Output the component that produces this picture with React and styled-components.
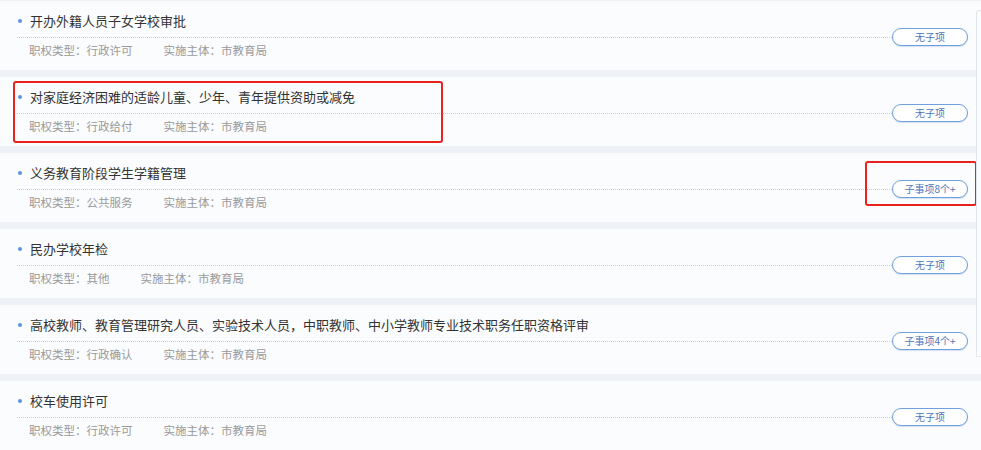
import React from "react";
import styled, { createGlobalStyle } from "styled-components";

const items = [
  { title: "开办外籍人员子女学校审批", type: "行政许可", sub: "无子项" },
  {
    title: "对家庭经济困难的适龄儿童、少年、青年提供资助或减免",
    type: "行政给付",
    sub: "无子项",
    mark: { left: 13, top: 4, width: 430, height: 62 },
  },
  {
    title: "义务教育阶段学生学籍管理",
    type: "公共服务",
    sub: "子事项8个+",
    mark: { left: 865, top: 8, width: 112, height: 45 },
  },
  { title: "民办学校年检", type: "其他", sub: "无子项" },
  {
    title: "高校教师、教育管理研究人员、实验技术人员，中职教师、中小学教师专业技术职务任职资格评审",
    type: "行政确认",
    sub: "子事项4个+",
  },
  { title: "校车使用许可", type: "行政许可", sub: "无子项" },
];

export default function App() {
  return (
    <>
      <GlobalStyle />
      <List>
        {items.map((item, i) => (
          <Card key={i}>
            <Main>
              <Title>{item.title}</Title>
              <Meta>
                <span>职权类型：{item.type}</span>
                <span>实施主体：市教育局</span>
              </Meta>
            </Main>
            <SubButton>{item.sub}</SubButton>
            {item.mark && <Mark style={item.mark} />}
          </Card>
        ))}
      </List>
      <SidePanel />
    </>
  );
}

const GlobalStyle = createGlobalStyle`
  html, body {
    margin: 0;
    padding: 0;
    background: #eef2f6;
    font-family: "Noto Sans CJK SC", "Noto Sans", sans-serif;
    overflow: hidden;
  }
`;

const List = styled.div`
  display: flex;
  flex-direction: column;
  gap: 7px;
  padding-top: 1px;
  height: 450px;
`;

const Card = styled.div`
  position: relative;
  flex: none;
  height: 69px;
  background: #fbfcfe;
  display: flex;
  align-items: flex-start;
  padding: 0 13px 0 17px;
  box-sizing: border-box;
`;

const Main = styled.div`
  flex: 1;
  min-width: 0;
`;

const Title = styled.div`
  position: relative;
  padding: 11px 0 7px 13px;
  line-height: 18px;
  font-size: 13px;
  color: #333;
  border-bottom: 1px dotted #c8c8c8;
  white-space: nowrap;
  &::before {
    content: "";
    position: absolute;
    left: 1px;
    top: 18px;
    width: 4px;
    height: 4px;
    border-radius: 50%;
    background: #5b92e0;
  }
`;

const Meta = styled.div`
  display: flex;
  gap: 31px;
  padding: 4px 0 0 12px;
  line-height: 16px;
  font-size: 11.5px;
  color: #9a9a9a;
`;

const SubButton = styled.div`
  flex: none;
  width: 76px;
  height: 18px;
  margin-top: 27px;
  box-sizing: border-box;
  border: 1px solid #6f9fdc;
  border-radius: 9px;
  background: #fff;
  box-shadow: 0 1px 1px rgba(90, 140, 210, 0.25);
  font-size: 10px;
  line-height: 16px;
  text-align: center;
  color: #4b74b8;
`;

const Mark = styled.div`
  position: absolute;
  box-sizing: border-box;
  border: 2px solid #e8231f;
  border-radius: 3px;
  pointer-events: none;
`;

const SidePanel = styled.div`
  position: absolute;
  left: 976px;
  top: 10px;
  width: 12px;
  height: 345px;
  background: #fdfdfe;
  border-left: 1px solid #dfe6ee;
  border-top: 1px solid #dfe6ee;
  border-bottom: 1px solid #e6ebf1;
  border-top-left-radius: 4px;
`;
